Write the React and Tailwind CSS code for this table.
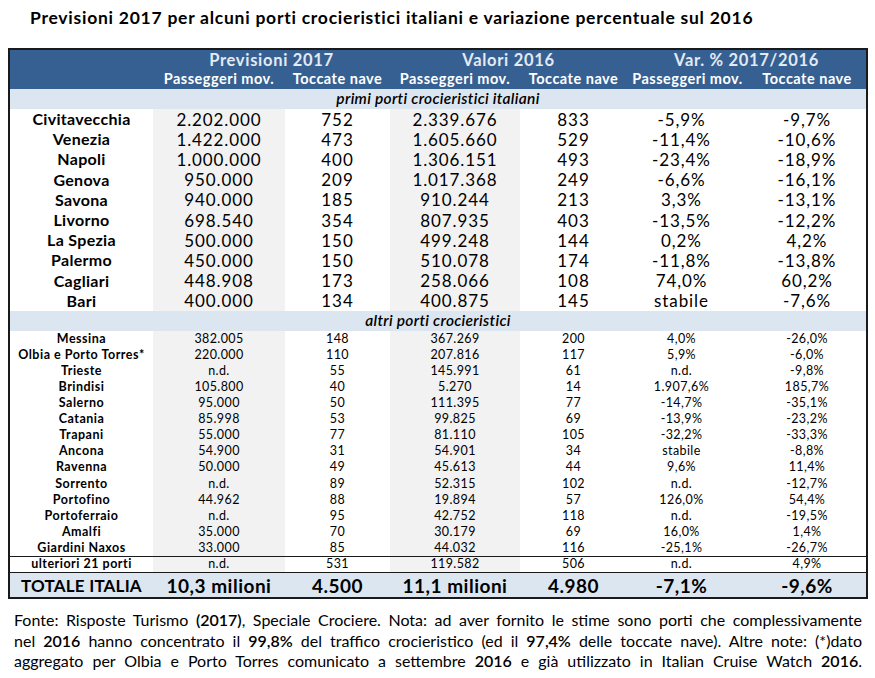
import React from "react";

const mainPorts = [
  ["Civitavecchia", "2.202.000", "752", "2.339.676", "833", "-5,9%", "-9,7%"],
  ["Venezia", "1.422.000", "473", "1.605.660", "529", "-11,4%", "-10,6%"],
  ["Napoli", "1.000.000", "400", "1.306.151", "493", "-23,4%", "-18,9%"],
  ["Genova", "950.000", "209", "1.017.368", "249", "-6,6%", "-16,1%"],
  ["Savona", "940.000", "185", "910.244", "213", "3,3%", "-13,1%"],
  ["Livorno", "698.540", "354", "807.935", "403", "-13,5%", "-12,2%"],
  ["La Spezia", "500.000", "150", "499.248", "144", "0,2%", "4,2%"],
  ["Palermo", "450.000", "150", "510.078", "174", "-11,8%", "-13,8%"],
  ["Cagliari", "448.908", "173", "258.066", "108", "74,0%", "60,2%"],
  ["Bari", "400.000", "134", "400.875", "145", "stabile", "-7,6%"],
];

const otherPorts = [
  ["Messina", "382.005", "148", "367.269", "200", "4,0%", "-26,0%"],
  ["Olbia e Porto Torres*", "220.000", "110", "207.816", "117", "5,9%", "-6,0%"],
  ["Trieste", "n.d.", "55", "145.991", "61", "n.d.", "-9,8%"],
  ["Brindisi", "105.800", "40", "5.270", "14", "1.907,6%", "185,7%"],
  ["Salerno", "95.000", "50", "111.395", "77", "-14,7%", "-35,1%"],
  ["Catania", "85.998", "53", "99.825", "69", "-13,9%", "-23,2%"],
  ["Trapani", "55.000", "77", "81.110", "105", "-32,2%", "-33,3%"],
  ["Ancona", "54.900", "31", "54.901", "34", "stabile", "-8,8%"],
  ["Ravenna", "50.000", "49", "45.613", "44", "9,6%", "11,4%"],
  ["Sorrento", "n.d.", "89", "52.315", "102", "n.d.", "-12,7%"],
  ["Portofino", "44.962", "88", "19.894", "57", "126,0%", "54,4%"],
  ["Portoferraio", "n.d.", "95", "42.752", "118", "n.d.", "-19,5%"],
  ["Amalfi", "35.000", "70", "30.179", "69", "16,0%", "1,4%"],
  ["Giardini Naxos", "33.000", "85", "44.032", "116", "-25,1%", "-26,7%"],
];

const gray = [1, 3];

function Row({ cells, big, className = "" }) {
  return (
    <tr className={`${big ? "h-[20.2px]" : "h-[16.1px]"} ${className}`}>
      {cells.map((c, i) => (
        <td
          key={i}
          className={`p-0 text-center leading-none ${gray.includes(i) ? "bg-[#f2f2f2]" : ""} ${
            i === 5 ? "pr-[12px]" : ""
          } ${
            i === 0
              ? big
                ? "text-[16px] font-bold tracking-[0.3px]"
                : "text-[12.5px] font-bold tracking-[0.5px]"
              : big
              ? "text-[17px] tracking-[0.9px]"
              : "text-[12.5px] tracking-[0.4px]"
          }`}
        >
          {c}
        </td>
      ))}
    </tr>
  );
}

export default function App() {
  return (
    <div className="w-[875px] h-[678px] bg-white text-black font-['Lato',sans-serif] overflow-hidden">
      <h1 className="pl-[30px] pt-[8px] h-[48px] text-[17.5px] font-bold tracking-[0.75px] leading-[20px]">
        Previsioni 2017 per alcuni porti crocieristici italiani e variazione percentuale sul 2016
      </h1>
      <div className="pl-[8px]">
        <table className="table-fixed border-collapse w-[858px] border-2 border-[#1a1a1a]">
          <colgroup>
            <col className="w-[144px]" />
            <col className="w-[132px]" />
            <col className="w-[105px]" />
            <col className="w-[130px]" />
            <col className="w-[107px]" />
            <col className="w-[121px]" />
            <col className="w-[119px]" />
          </colgroup>
          <thead>
            <tr className="h-[20px] bg-[#376092] text-[#e3eaf3]">
              <th className="p-0" />
              <th colSpan={2} className="p-0 pt-[2px] text-[16.5px] font-bold tracking-[0.7px] leading-none">Previsioni 2017</th>
              <th colSpan={2} className="p-0 pt-[2px] text-[16.5px] font-bold tracking-[0.7px] leading-none">Valori 2016</th>
              <th colSpan={2} className="p-0 pt-[2px] text-[16.5px] font-bold tracking-[0.7px] leading-none">Var. % 2017/2016</th>
            </tr>
            <tr className="h-[20px] bg-[#376092] text-white">
              <th className="p-0" />
              {["Passeggeri mov.", "Toccate nave", "Passeggeri mov.", "Toccate nave", "Passeggeri mov.", "Toccate nave"].map((h, i) => (
                <th key={i} className="p-0 text-[14.5px] font-bold tracking-[0.5px] leading-none">{h}</th>
              ))}
            </tr>
          </thead>
          <tbody>
            <tr className="h-[20px] bg-[#dce6f1]">
              <td colSpan={7} className="p-0 text-center text-[15.5px] font-semibold italic tracking-[0.3px] leading-none">
                primi porti crocieristici italiani
              </td>
            </tr>
            {mainPorts.map((r) => (
              <Row key={r[0]} cells={r} big />
            ))}
            <tr className="h-[20px] bg-[#dce6f1]">
              <td colSpan={7} className="p-0 text-center text-[15.5px] font-semibold italic tracking-[0.3px] leading-none">
                altri porti crocieristici
              </td>
            </tr>
            {otherPorts.map((r) => (
              <Row key={r[0]} cells={r} />
            ))}
            <Row
              cells={["ulteriori 21 porti", "n.d.", "531", "119.582", "506", "n.d.", "4,9%"]}
              className="border-y border-[#1a1a1a]"
            />
            <tr className="h-[26px] bg-[#dce6f1]">
              {["TOTALE ITALIA", "10,3 milioni", "4.500", "11,1 milioni", "4.980", "-7,1%", "-9,6%"].map((c, i) => (
                <td
                  key={i}
                  className={`p-0 text-center font-bold leading-none ${
                    i === 0 ? "text-[17px] tracking-[0.2px]" : "text-[19px] tracking-[0.5px]"
                  } ${i === 5 ? "pr-[12px]" : ""}`}
                >
                  {c}
                </td>
              ))}
            </tr>
          </tbody>
        </table>
      </div>
      <div className="mx-[14px] mt-[11px] w-[848px] text-[16px] leading-[20.5px] text-justify [text-align-last:justify]">
        <div>
          Fonte: Risposte Turismo <span className="font-semibold">(2017)</span>, Speciale Crociere. Nota: ad aver fornito le stime sono porti che complessivamente
        </div>
        <div>
          nel <span className="font-semibold">2016</span> hanno concentrato il <span className="font-semibold">99,8%</span> del traffico crocieristico (ed il <span className="font-semibold">97,4%</span> delle toccate nave). Altre note: (*)dato
        </div>
        <div>
          aggregato per Olbia e Porto Torres comunicato a settembre <span className="font-semibold">2016</span> e già utilizzato in Italian Cruise Watch <span className="font-semibold">2016</span>.
        </div>
      </div>
    </div>
  );
}
